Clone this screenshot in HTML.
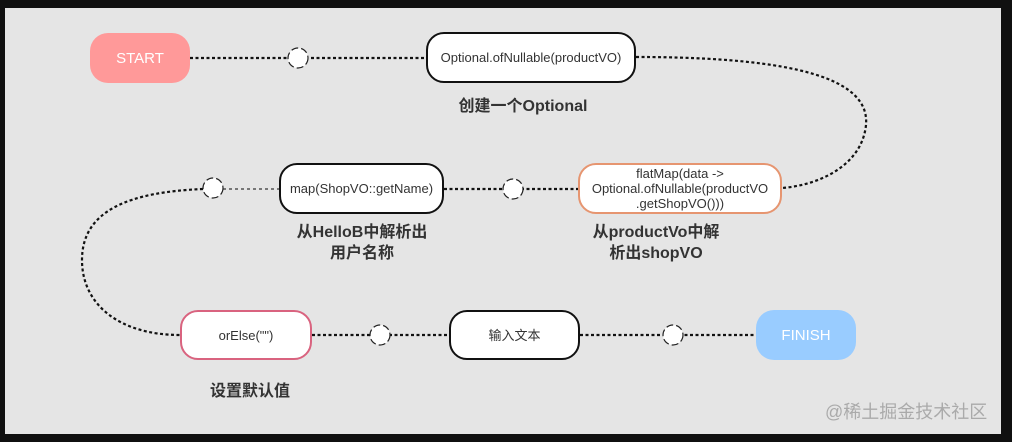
<!DOCTYPE html>
<html><head><meta charset="utf-8"><style>
body{margin:0;width:1012px;height:442px;background:#101010;overflow:hidden;font-family:"Liberation Sans","Noto Sans CJK SC",sans-serif;}
.bg{position:absolute;left:5px;top:8px;width:996px;height:426px;background:#e5e5e5;}
.b{position:absolute;box-sizing:border-box;border-radius:18px;display:flex;align-items:center;justify-content:center;text-align:center;font-size:13px;color:#333;background:#fff;border:2px solid #111;line-height:15px;}
.lbl{position:absolute;font-size:16px;font-weight:bold;color:#333;text-align:center;line-height:21px;}
</style></head><body>
<div class="bg"></div>
<svg width="1012" height="442" style="position:absolute;left:0;top:0">
<g fill="none" stroke="#111" stroke-width="2.2" stroke-dasharray="3 2.5">
<line x1="190" y1="58" x2="426" y2="58"/>
<path d="M636,57 C800,57 870,80 866,125 C862,165 820,185 782,188"/>
<line x1="444" y1="189" x2="578" y2="189"/>
<path d="M203,189 C130,192 82,210 82,260 C82,305 120,335 180,335"/>
<line x1="312" y1="335" x2="449" y2="335"/>
<line x1="580" y1="335" x2="756" y2="335"/>
</g>
<line x1="223" y1="189" x2="279" y2="189" stroke="#777" stroke-width="2" stroke-dasharray="3 3"/>
<g fill="#fff" stroke="#222" stroke-width="1.2" stroke-dasharray="7 3">
<circle cx="298" cy="58" r="10"/><circle cx="513" cy="189" r="10"/><circle cx="213" cy="188" r="10"/>
<circle cx="380" cy="335" r="10"/><circle cx="673" cy="335" r="10"/>
</g>
</svg>
<div class="b" style="left:90px;top:33px;width:100px;height:50px;background:#ff9999;border:none;color:#fff;font-size:15px">START</div>
<div class="b" style="left:426px;top:32px;width:210px;height:51px">Optional.ofNullable(productVO)</div>
<div class="lbl" style="left:423px;top:96px;width:200px">创建一个Optional</div>
<div class="b" style="left:578px;top:163px;width:204px;height:51px;border-color:#e69570;font-size:13px">flatMap(data -&gt;<br>Optional.ofNullable(productVO<br>.getShopVO()))</div>
<div class="b" style="left:279px;top:163px;width:165px;height:51px">map(ShopVO::getName)</div>
<div class="lbl" style="left:262px;top:222px;width:200px">从HelloB中解析出<br>用户名称</div>
<div class="lbl" style="left:556px;top:222px;width:200px">从productVo中解<br>析出shopVO</div>
<div class="b" style="left:180px;top:310px;width:132px;height:50px;border-color:#d9637f">orElse("")</div>
<div class="b" style="left:449px;top:310px;width:131px;height:50px">输入文本</div>
<div class="b" style="left:756px;top:310px;width:100px;height:50px;background:#99ccff;border:none;color:#fff;font-size:15px">FINISH</div>
<div class="lbl" style="left:150px;top:381px;width:200px">设置默认值</div>
<div style="position:absolute;left:825px;top:398px;font-size:18px;color:#aaa">@稀土掘金技术社区</div>
</body></html>
